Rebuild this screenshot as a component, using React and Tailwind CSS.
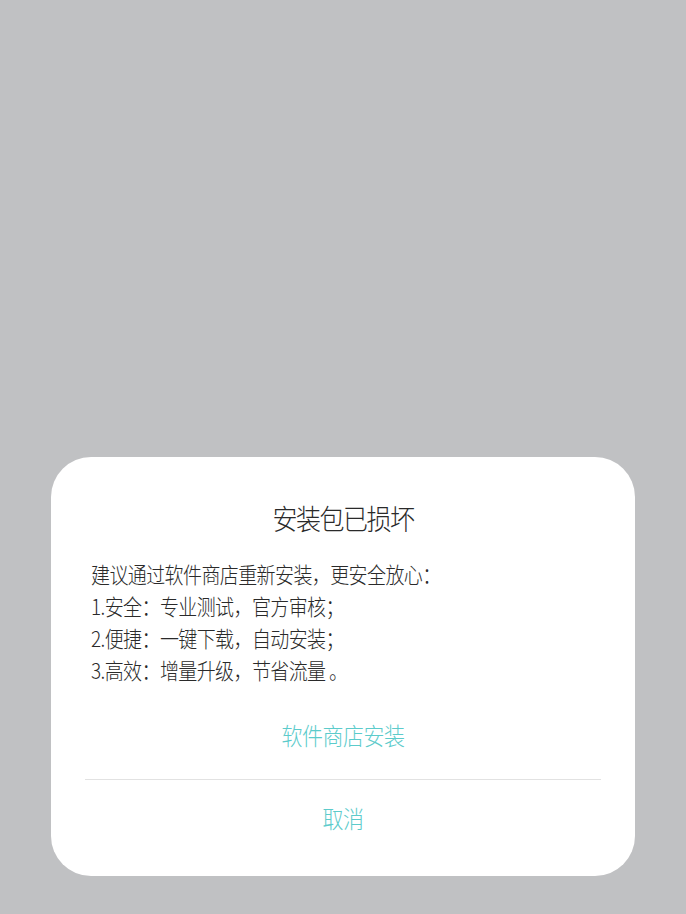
export default function App() {
  const lines = [
    "建议通过软件商店重新安装，更安全放心：",
    "1.安全：专业测试，官方审核；",
    "2.便捷：一键下载，自动安装；",
    "3.高效：增量升级，节省流量 。",
  ];

  return (
    <div
      className="h-[914px] w-full bg-[#c0c1c3] flex flex-col justify-end px-[51px] pb-[38px]"
      style={{ fontFamily: '"Noto Sans CJK SC", "Noto Sans", sans-serif' }}
    >
      <div className="bg-white rounded-[40px] h-[419px] flex flex-col">
        {/* 标题 */}
        <h1 className="pt-[42px] text-center text-[25px] leading-[32px] tracking-[-1.5px] font-light text-[#2a2a2a] scale-y-[1.12]">
          安装包已损坏
        </h1>

        {/* 说明 */}
        <div className="mt-[27px] px-[40px] text-[19px] leading-[32px] tracking-[-0.6px] font-light text-[#2a2a2a]">
          {lines.map((l) => (
            <p key={l} className="scale-y-[1.12]">{l}</p>
          ))}
        </div>

        {/* 按钮 */}
        <button className="mt-[37px] mb-[32px] text-center text-[21px] leading-[24px] tracking-[-0.5px] font-light text-[#5ccbcb] scale-y-[1.12]">
          软件商店安装
        </button>
        <div className="mx-[34px] h-px bg-[#e2e2e2]" />
        <button className="mt-[26px] text-center text-[21px] leading-[24px] tracking-[-0.5px] font-light text-[#5ccbcb] scale-y-[1.12]">
          取消
        </button>
      </div>
    </div>
  );
}
